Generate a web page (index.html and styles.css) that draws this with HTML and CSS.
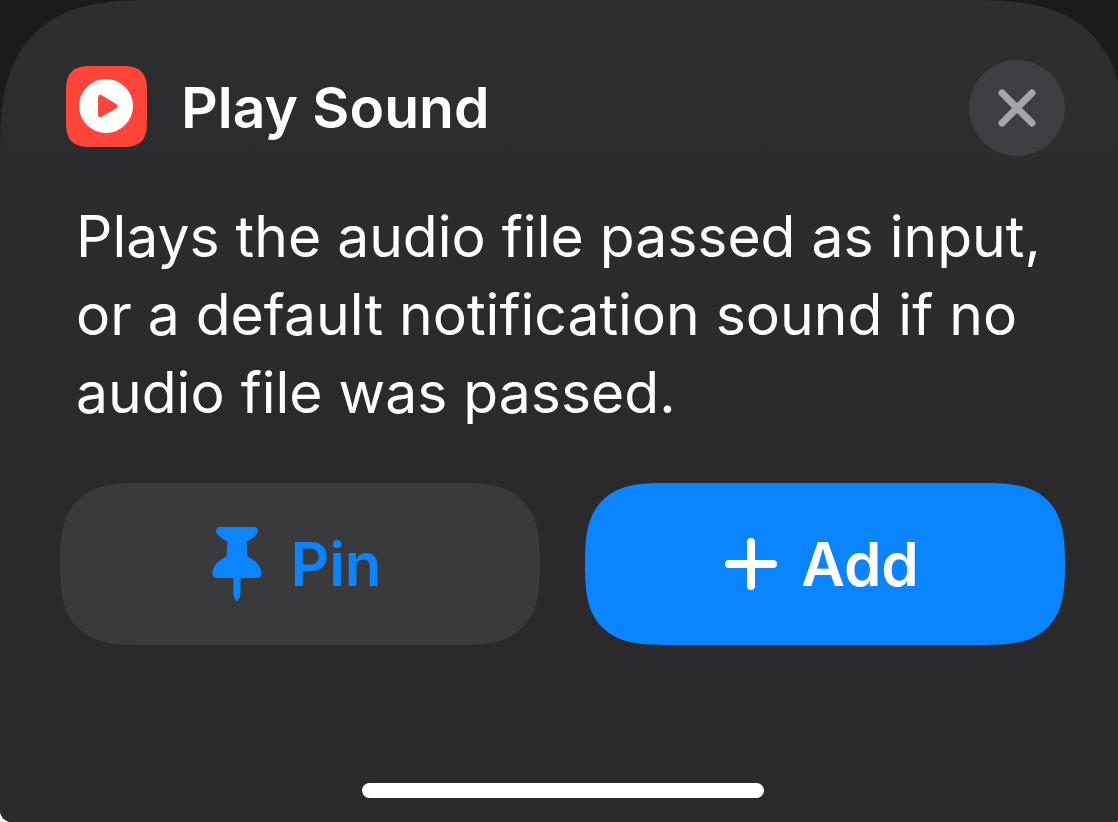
FILE: index.html
```html
<!DOCTYPE html>
<html lang="en">
<head>
<meta charset="utf-8">
<meta name="viewport" content="width=device-width, initial-scale=1">
<title>Play Sound</title>
<link rel="stylesheet" href="styles.css">
</head>
<body>
<div class="screen">
  <main class="sheet">
    <header class="header">
      <svg class="app-icon" viewBox="0 0 81 81" aria-hidden="true">
        <path fill="#ff453a" d="M24 0H57C74 0 81 7 81 24V57C81 74 74 81 57 81H24C7 81 0 74 0 57V24C0 7 7 0 24 0Z"/>
        <circle cx="40" cy="40" r="27" fill="#fff"/>
        <path fill="#ff453a" d="M32 31.500C32 29.200 33.800 28.200 35.600 29.200L50.300 37.900C52 39 52 41.200 50.300 42.300L35.600 50.700C33.800 51.700 32 50.700 32 48.500Z"/>
      </svg>
      <h1 class="title">Play Sound</h1>
      <button class="close" type="button" aria-label="Close">
        <svg class="close-icon" viewBox="0 0 38 38" aria-hidden="true">
          <path d="M4 4L34 34M34 4L4 34" fill="none" stroke="#a5a5ae" stroke-width="7" stroke-linecap="round"/>
        </svg>
      </button>
    </header>
    <p class="description">Plays the audio file passed as input, or a default notification sound if no audio file was passed.</p>
    <div class="actions">
      <button class="action action-pin" type="button">
        <svg class="pin-icon" viewBox="0 0 50 76" aria-hidden="true">
          <path fill="currentColor" d="M8 1H42C44.500 1 46 2.500 46 5C46 8 41 12.500 34.500 15.500L35.500 30.500C44 34 49.500 41 49.500 47C49.500 50 48 52 45 52H28.500V67C28.500 70 27 73.500 25 75.500C23 73.500 21.500 70 21.500 67V52H5C2 52 .5 50 .5 47C.5 41 6 34 14.500 30.500L15.500 15.500C9 12.500 4 8 4 5C4 2.500 5.500 1 8 1Z"/>
        </svg>
        <span>Pin</span>
      </button>
      <button class="action action-add" type="button">
        <svg class="add-icon" viewBox="0 0 52 52" aria-hidden="true">
          <path d="M26 4V48M4 26H48" fill="none" stroke="currentColor" stroke-width="8" stroke-linecap="round"/>
        </svg>
        <span>Add</span>
      </button>
    </div>
    <div class="home-indicator"></div>
  </main>
</div>
</body>
</html>
```

FILE: styles.css
```css
* {
  box-sizing: border-box;
}

body {
  margin: 0;
  background: #fff;
  color: #fff;
  font-family: Inter, "Liberation Sans", sans-serif;
}

.screen {
  display: flex;
  min-height: 100vh;
  overflow: hidden;
  background: #1b1b1c;
  border-radius: 0 0 2px 12px;
}

/* The sheet bleeds past the right edge of the screen. */
.sheet {
  display: flex;
  flex: 1;
  flex-direction: column;
  margin-right: -7px;
  padding: 60px 60px 24px;
  background: linear-gradient(#2d2e2f, #2a2a2c 400px);
  border-radius: 116px 116px 0 0;
}

.header {
  display: flex;
  align-items: center;
  padding-left: 6px;
}

.app-icon {
  width: 81px;
  height: 81px;
  margin-bottom: 4px;
}

.title {
  flex: 1;
  margin: 0 0 0 34px;
  font-size: 57px;
  font-weight: 600;
  line-height: 72px;
}

.close {
  display: flex;
  align-items: center;
  justify-content: center;
  width: 96px;
  height: 96px;
  padding: 0;
  border: 0;
  border-radius: 50%;
  background: #3e3e42;
}

.close-icon {
  width: 38px;
  height: 38px;
}

.description {
  margin: 42px 0 0;
  padding-left: 16px;
  font-size: 57px;
  font-weight: 400;
  line-height: 78px;
}

.actions {
  display: grid;
  grid-template-columns: 1fr 1fr;
  gap: 45px;
  margin-top: 51px;
}

.action {
  display: flex;
  align-items: center;
  justify-content: center;
  height: 162px;
  padding: 0 6px 0 0;
  border: 0;
  border-radius: 60px;
  font-family: inherit;
  font-size: 60px;
  font-weight: 600;
}

@supports (corner-shape: squircle) {
  .sheet,
  .action {
    corner-shape: superellipse(1.5);
  }

  .sheet {
    border-radius: 156px 156px 0 0;
  }

  .action {
    border-radius: 80px;
  }
}

.action-pin {
  gap: 28px;
  background: #3a3a3c;
  color: #0a84ff;
}

.action-add {
  gap: 24px;
  background: #0a84ff;
  color: #fff;
}

.pin-icon {
  width: 50px;
  height: 76px;
}

.add-icon {
  width: 52px;
  height: 52px;
}

.home-indicator {
  width: 402px;
  height: 15px;
  margin: auto auto 0;
  border-radius: 8px;
  background: #fff;
}
```
